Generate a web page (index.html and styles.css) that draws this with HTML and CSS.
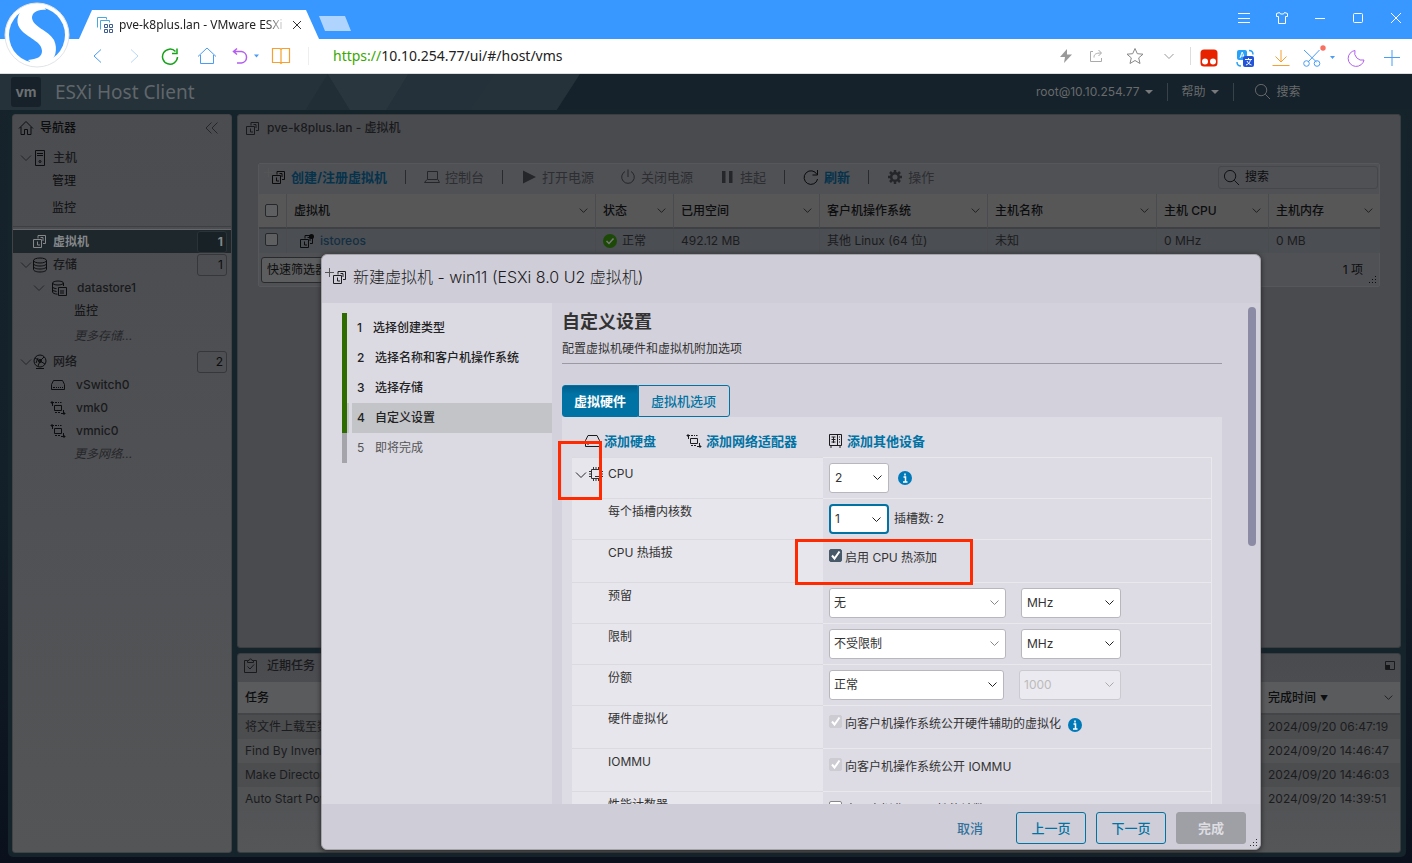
FILE: index.html
```html
<!DOCTYPE html>
<html lang="zh-CN">
<head>
<meta charset="utf-8">
<title>pve-k8plus.lan - VMware ESXi</title>
<link rel="stylesheet" href="styles.css">
</head>
<body>
<svg class="sprite" aria-hidden="true">
  <symbol id="i-vm" viewBox="0 0 15 15"><path d="M6 4.500v-3h7.500v8H11M1.500 5.500h8v8h-8zM5.500 7.500v3.500h2.500M8.500 3.500h2.500v3.500"/></symbol>
  <symbol id="i-newvm" viewBox="0 0 22 18"><path d="M0 4.500h9M4.500 0v9" stroke="#555"/><path d="M13 6.500v-3h7.500v8H18M8.500 7.500h8v8h-8zM12.500 9.500V13H15M15.500 5.500H18V9"/></symbol>
  <symbol id="i-chev" viewBox="0 0 12 12"><path d="M1 3.500l5 5 5-5"/></symbol>
  <symbol id="i-home" viewBox="0 0 16 16"><path d="M1 8.500L8 1.500l7 7M3 7v7.500h3.500V9.500h3v5H13V7"/></symbol>
  <symbol id="i-host" viewBox="0 0 16 16"><path d="M3.500.5h9v15h-9zM5 3.500h6M5 5.500h6"/><circle cx="8" cy="11.500" r="1"/></symbol>
  <symbol id="i-db" viewBox="0 0 16 16"><ellipse cx="8" cy="3.500" rx="6.500" ry="2.500"/><path d="M1.500 3.500v9c0 1.400 2.900 2.500 6.500 2.500s6.500-1.100 6.500-2.500v-9M1.500 6.500C1.500 8 4.400 9 8 9s6.500-1 6.500-2.500M1.500 9.500C1.500 11 4.400 12 8 12s6.500-1 6.500-2.500"/></symbol>
  <symbol id="i-ds" viewBox="0 0 16 16"><path d="M1.500 3c0-1 2.500-2 5.500-2s5.500 1 5.500 2-2.500 2-5.500 2-5.500-1-5.500-2zv9c0 1 2 2 5 2.200M12.500 3v3M1.500 7c.5 1 2 1.500 4 1.600M1.500 10.500l4 1M7.500 7.500h8v8h-8zM10 10v4M12 10v4"/></symbol>
  <symbol id="i-net" viewBox="0 0 16 16"><circle cx="8" cy="7" r="6"/><path d="M4 14.500h8M3 4l5 3 4-4M8 7l-2 5M8 7l5 3M4 9l2-5"/><circle cx="8" cy="7" r="1.500"/></symbol>
  <symbol id="i-switch" viewBox="0 0 16 16"><path d="M1.500 7.500L3.500 3.500h9l2 4v5h-13zM3 10.500h2M6 10.500h1M8 10.500h1M10 10.500h1M12 10.500h1"/></symbol>
  <symbol id="i-nic" viewBox="0 0 16 16"><path d="M4.500 5.500h7v5h-7zM1 2.500h3M2.500 1L1 2.500 2.500 4M2.500 3v3M5 2.500h2M8 2.500h1M10 2.500h1.500M11 13.500h4M13.500 12l1.500 1.500-1.500 1.500M13.500 10v3M5 12.500h2M8 12.500h2"/></symbol>
  <symbol id="i-search" viewBox="0 0 18 18"><circle cx="7.500" cy="7.500" r="6"/><path d="M12 12l5 5"/></symbol>
  <symbol id="i-console" viewBox="0 0 16 16"><path d="M3.500 2.500h10v8h-10zM.5 13.500h15M3 10.500l-2.500 3M14 10.500l1.500 3"/></symbol>
  <symbol id="i-power" viewBox="0 0 16 16"><path d="M5 2.500a6.300 6.300 0 1 0 6 0M8 .5V8"/></symbol>
  <symbol id="i-refresh" viewBox="0 0 16 16"><path d="M14 5.500A6.800 6.800 0 1 0 14.600 10M14.500 1v5h-5"/></symbol>
  <symbol id="i-gear" viewBox="0 0 16 16"><circle cx="8" cy="8" r="3.800" stroke-width="2.500"/><path stroke-width="2.500" d="M8 1v3M8 12v3M1 8h3M12 8h3M3 3l2 2M11 11l2 2M13 3l-2 2M5 11l-2 2"/></symbol>
  <symbol id="i-tasks" viewBox="0 0 14 16"><path d="M3.500 2.500h-3v12h12v-12h-3M3.500 4.500v-2h1.500a1.500 1.500 0 0 1 3 0h1.500v2zM3.500 8.500l2.500 2.500 4-4.500"/></symbol>
  <symbol id="i-disk" viewBox="0 0 16 16"><path d="M1.500 9.500v-2l2.500-5h9l2.500 5v6h-14v-4h14M3.500 11.500h1"/></symbol>
  <symbol id="i-device" viewBox="0 0 16 16"><path d="M2.500 1.500h12v11h-12zM10.500 1.500v11M4.500 4h4M4.500 6.500h4M4.500 9h4M6.500 4v6M12 4h1M12 6.500h1M12 9h1M4 13v2M13 13v2"/></symbol>
  <symbol id="i-cpu" viewBox="0 0 16 16"><path d="M3.500 3.500h9v9h-9zM5.500 1v2M8 1v2M10.500 1v2M5.500 13v2M8 13v2M10.500 13v2M1 5.500h2M1 8h2M1 10.500h2M13 5.500h2M13 8h2M13 10.500h2M7 10.500h4"/></symbol>
  <symbol id="i-info" viewBox="0 0 14 14"><circle cx="7" cy="7" r="7" fill="#0079b8" stroke="none"/><path d="M7 2.500v2M5.500 6h2v5M5 11h4.500" stroke="#fff" stroke-width="1.500"/></symbol>
  <symbol id="i-grip" viewBox="0 0 8 8"><path fill="currentColor" stroke="none" d="M6 0h1v1H6zM3 3h1v1H3zM6 3h1v1H6zM0 6h1v1H0zM3 6h1v1H3zM6 6h1v1H6z"/></symbol>
</svg>

<header class="browser">
  <div class="tabstrip">
    <div class="tab">
      <svg class="fav" viewBox="0 0 16 16"><path d="M.5 10.500v-10h9v2M3.500 12.500v-9h9v2" stroke="#4aa8e0"/><path d="M7.500 7.500h3v3h-3zM12.500 7.500h3v3h-3zM7.500 12.500h3v3h-3zM12.500 12.500h3v3h-3z" stroke="#3c5a94"/></svg>
      <span class="tab-title">pve-k8plus.lan - VMware ESXi</span>
      <button class="bare" aria-label="关闭标签"><svg class="x" viewBox="0 0 10 10"><path d="M1 1l8 8M9 1l-8 8" stroke="#333"/></svg></button>
    </div>
    <button class="newtab" aria-label="新标签"></button>
    <div class="winctl">
      <button class="bare" aria-label="菜单"><svg viewBox="0 0 16 16"><path d="M2 3.500h12M2 8.500h12M2 12.500h12"/></svg></button>
      <button class="bare" aria-label="皮肤"><svg viewBox="0 0 16 16"><path d="M5.500 2.500L2.500 3.500v3h2v7h7v-7h2v-3l-3-1-1 1.500h-3z"/></svg></button>
      <button class="bare" aria-label="最小化"><svg viewBox="0 0 16 16"><path d="M3 8.500h10"/></svg></button>
      <button class="bare" aria-label="最大化"><svg viewBox="0 0 16 16"><rect x="3.500" y="3.500" width="9" height="9" rx="1"/></svg></button>
      <button class="bare" aria-label="关闭"><svg viewBox="0 0 16 16"><path d="M3 3l10 10M13 3L3 13"/></svg></button>
    </div>
  </div>
  <div class="toolbar">
    <div class="tools-left">
      <button class="bare" aria-label="后退"><svg viewBox="0 0 18 18"><path d="M12 2.500L5 9l7 6.500" stroke="#4a9cf4"/></svg></button>
      <button class="bare" aria-label="前进"><svg viewBox="0 0 18 18"><path d="M6 2.500L13 9l-7 6.500" stroke="#b9d8fa"/></svg></button>
      <button class="bare" aria-label="刷新"><svg viewBox="0 0 18 18"><path d="M14.500 4.500A7.500 7.500 0 1 0 16.500 10M16 1.500v5h-5" stroke="#16a31a" stroke-width="1.500"/></svg></button>
      <button class="bare" aria-label="主页"><svg viewBox="0 0 20 18"><path d="M1 9.500L10 1l9 8.500M3.500 8v8.500h13V8" stroke="#4a9cf4"/></svg></button>
      <button class="bare" aria-label="撤销"><svg viewBox="0 0 28 18"><path d="M6 1.500L2.500 4.500 6 7.500M3 4.500h7.500a5.800 5.800 0 0 1 0 11.500H6" stroke="#b25ff0" stroke-width="1.500"/><path d="M23 7.500h5l-2.500 3z" fill="#4a9cf4" stroke="none"/></svg></button>
      <button class="bare" aria-label="收藏夹"><svg viewBox="0 0 20 18"><path d="M10 2.500v13M10 2.500L9 1.500H1.500v14H9l1 1 1-1h7.500v-14H11z" stroke="#f5a030" stroke-width="1.200"/></svg></button>
    </div>
    <div class="address"><span class="scheme">https://</span>10.10.254.77/ui/#/host/vms</div>
    <div class="addr-tools">
      <svg viewBox="0 0 16 16"><path d="M9 1L2 9h5l-1 6 8-8.500H9z" fill="#999" stroke="none"/></svg>
      <svg viewBox="0 0 16 16"><path d="M5 3.500H2.500v10h11V10M6 9.500c0-3 1.500-4.500 7-4.500M10.500 2l3 3-3 3" stroke="#aaa"/></svg>
      <svg class="star" viewBox="0 0 18 18"><path d="M9 1.500l2.300 5.200 5.700.5-4.300 3.700 1.300 5.600L9 13.500l-5 3 1.300-5.600L1 7.200l5.700-.5z" stroke="#888"/></svg>
      <svg class="dn" viewBox="0 0 16 16"><path d="M3.500 6L8 10.500 12.500 6" stroke="#999"/></svg>
    </div>
    <div class="ext-tools">
      <svg viewBox="0 0 18 18"><rect width="17" height="17" x=".5" y=".5" rx="3.500" fill="#e62200" stroke="none"/><circle cx="5" cy="12.500" r="3" fill="#fff" stroke="none"/><circle cx="13" cy="12.500" r="3" fill="#fff" stroke="none"/></svg>
      <svg viewBox="0 0 18 18"><rect x="1" y="1" width="10" height="10" rx="2" fill="#28a2f8" stroke="none"/><path d="M4 9l2.200-6L8.500 9M5 7h3" stroke="#fff"/><rect x="7" y="7" width="11" height="11" rx="2" fill="#2455d8" stroke="none"/><path d="M9 10.500h7M12.500 9v1.500M10 16c3-1 4-3 4.500-5.500M11 12c1 2 2.500 3.500 4.500 4" stroke="#fff"/><path d="M1 13c0 3 1.500 4 4 4M13 1.500c3 0 4 1.500 4 4" stroke="#28a2f8" stroke-width="1.500"/></svg>
      <svg viewBox="0 0 18 18"><path d="M9 1v12M3.500 7.500L9 13l5.500-5.500M.5 16.500h17" stroke="#f5a030"/></svg>
      <svg class="wide" viewBox="0 -4 32 22"><path d="M1 1l12.500 12M16.500 1L5 13" stroke="#4a9cf4"/><circle cx="3.500" cy="14.500" r="2.800" stroke="#4a9cf4"/><circle cx="14" cy="14.500" r="2.800" stroke="#4a9cf4"/><circle cx="20" cy="-1" r="2.700" fill="#f87060" stroke="none"/><path d="M27 7h5l-2.500 3z" fill="#4a9cf4" stroke="none"/></svg>
      <svg viewBox="0 0 18 18"><path d="M8 1.500a8 8 0 1 0 9 9.500A7.500 7.500 0 0 1 8 1.500z" stroke="#b25ff0"/></svg>
      <svg viewBox="0 0 18 18"><path d="M9 1v16M1 8.500h16" stroke="#4a9cf4"/></svg>
    </div>
  </div>
  <svg class="sogou" viewBox="0 0 66 66"><circle cx="33" cy="33" r="32" fill="#fff" stroke="#e1e4e8"/><circle cx="33" cy="33" r="28" fill="#3898ff"/><path d="M21 4C12 13 11 22 18 29c8 8 20 11 20 20 0 6-5 8-14 9l6 5 13 0c9-6 11-16 7-25C44 28 29 25 28 16c0-5 5-9 14-8L38 2z" fill="#fff"/></svg>
</header>

<main class="app">
  <div class="masthead">
    <svg class="facets" viewBox="0 0 700 36" preserveAspectRatio="none" aria-hidden="true"><path d="M0 0h575l-23 36H0z" fill="#25323a"/><path d="M325 0l-22 36h44z" fill="#222e36"/><path d="M325 0h80l-22 36h-36z" fill="#2a363e"/><path d="M405 0h85l-24 36h-83z" fill="#24313a"/></svg>
    <span class="vmlogo">vm</span>
    <span class="product">ESXi Host Client</span>
    <div class="userbar">
      <button class="bare">root@10.10.254.77 <i class="caret"></i></button>
      <button class="bare ruled">帮助 <i class="caret"></i></button>
      <label class="mast-search ruled"><svg><use href="#i-search"/></svg><input type="text" aria-label="搜索" value="搜索"></label>
    </div>
  </div>

  <div class="workspace">
    <nav class="nav">
      <div class="nav-head"><svg class="ic"><use href="#i-home"/></svg><span>导航器</span><button class="bare collapse" aria-label="折叠"><svg viewBox="0 0 14 14"><path d="M6.500 1.500L1 7l5.500 5.500M12.500 1.500L7 7l5.500 5.500"/></svg></button></div>
      <a class="node" href="#"><svg class="ch"><use href="#i-chev"/></svg><svg class="ic"><use href="#i-host"/></svg><b>主机</b></a>
      <a class="node leaf" href="#">管理</a>
      <a class="node leaf tall" href="#">监控</a>
      <hr>
      <a class="node sel" href="#"><svg class="ic"><use href="#i-vm"/></svg><b>虚拟机</b><span class="count">1</span></a>
      <a class="node" href="#"><svg class="ch"><use href="#i-chev"/></svg><svg class="ic"><use href="#i-db"/></svg><b>存储</b><span class="count">1</span></a>
      <a class="node l2" href="#"><svg class="ch"><use href="#i-chev"/></svg><svg class="ic"><use href="#i-ds"/></svg><b>datastore1</b></a>
      <a class="node leaf2" href="#">监控</a>
      <a class="node leaf2 more" href="#"><i>更多存储...</i></a>
      <a class="node" href="#"><svg class="ch"><use href="#i-chev"/></svg><svg class="ic"><use href="#i-net"/></svg><b>网络</b><span class="count">2</span></a>
      <a class="node l3" href="#"><svg class="ic"><use href="#i-switch"/></svg><b>vSwitch0</b></a>
      <a class="node l3" href="#"><svg class="ic"><use href="#i-nic"/></svg><b>vmk0</b></a>
      <a class="node l3" href="#"><svg class="ic"><use href="#i-nic"/></svg><b>vmnic0</b></a>
      <a class="node leaf2" href="#"><i>更多网络...</i></a>
    </nav>

    <div class="content">
      <section class="panel vms">
        <h1 class="panel-title"><svg class="ic"><use href="#i-vm"/></svg>pve-k8plus.lan - 虚拟机</h1>
        <div class="grid">
          <div class="gridbar">
            <button class="bare act on"><svg class="nv"><use href="#i-newvm"/></svg>创建/注册虚拟机</button><span class="sep"></span>
            <button class="bare act"><svg><use href="#i-console"/></svg>控制台</button><span class="sep"></span>
            <button class="bare act"><svg viewBox="0 0 16 16"><path d="M2 1.500v13L15 8z" fill="#252629" stroke="none"/></svg>打开电源</button>
            <button class="bare act gap"><svg><use href="#i-power"/></svg>关闭电源</button>
            <button class="bare act gap"><svg viewBox="0 0 16 16"><path d="M3 2h3.500v12H3zM10 2h3.500v12H10z" fill="#252629" stroke="none"/></svg>挂起</button><span class="sep"></span>
            <button class="bare act on"><svg><use href="#i-refresh"/></svg>刷新</button><span class="sep"></span>
            <button class="bare act"><svg><use href="#i-gear"/></svg>操作</button>
            <label class="grid-search"><svg><use href="#i-search"/></svg><input type="text" aria-label="搜索虚拟机" value="搜索"></label>
          </div>
          <table class="vmtable">
            <colgroup><col class="c1"><col class="c2"><col class="c3"><col class="c4"><col class="c5"><col class="c6"><col class="c7"><col class="c8"></colgroup>
            <thead><tr>
              <th><input type="checkbox" aria-label="全选"></th>
              <th><div>虚拟机<svg><use href="#i-chev"/></svg></div></th>
              <th><div>状态<svg><use href="#i-chev"/></svg></div></th>
              <th><div>已用空间<svg><use href="#i-chev"/></svg></div></th>
              <th><div>客户机操作系统<svg><use href="#i-chev"/></svg></div></th>
              <th><div>主机名称<svg><use href="#i-chev"/></svg></div></th>
              <th><div>主机 CPU<svg><use href="#i-chev"/></svg></div></th>
              <th><div>主机内存<svg><use href="#i-chev"/></svg></div></th>
            </tr></thead>
            <tbody><tr>
              <td><input type="checkbox" aria-label="选择 istoreos"></td>
              <td><a class="vmname" href="#"><svg viewBox="0 0 15 15"><use href="#i-vm"/><circle cx="12.500" cy="2.500" r="2.500" fill="#0b0b0c" stroke="none"/></svg>istoreos</a></td>
              <td><span class="ok"><svg viewBox="0 0 14 14"><circle cx="7" cy="7" r="7" fill="#1c4a06" stroke="none"/><path d="M3.500 7L6 9.500l4.500-5" stroke="#777" stroke-width="1.500"/></svg>正常</span></td>
              <td>492.12 MB</td><td>其他 Linux (64 位)</td><td>未知</td><td>0 MHz</td><td>0 MB</td>
            </tr></tbody>
          </table>
          <div class="gridfoot"><select class="filter" aria-label="快速筛选器"><option>快速筛选器...</option></select><span>1 项</span><svg class="grip"><use href="#i-grip"/></svg></div>
        </div>
      </section>

      <section class="panel tasks">
        <h2 class="panel-title"><svg class="tk"><use href="#i-tasks"/></svg>近期任务<button class="bare restore" aria-label="还原"><svg viewBox="0 0 12 10"><path d="M1.500.5h9v8h-9z"/><path d="M2 4h4v4H2z" fill="#161719" stroke="none"/></svg></button></h2>
        <table class="tasktable">
          <colgroup><col><col class="when"></colgroup>
          <thead><tr><th>任务</th><th><div>完成时间 <small>▼</small><svg><use href="#i-chev"/></svg></div></th></tr></thead>
          <tbody>
            <tr><td>将文件上载至数据存储</td><td>2024/09/20 06:47:19</td></tr>
            <tr><td>Find By Inventory Path</td><td>2024/09/20 14:46:47</td></tr>
            <tr><td>Make Directory</td><td>2024/09/20 14:46:03</td></tr>
            <tr><td>Auto Start Power On</td><td>2024/09/20 14:39:51</td></tr>
          </tbody>
        </table>
      </section>
    </div>
  </div>

  <div class="overlay">
    <div class="modal" role="dialog" aria-labelledby="dlg-title">
      <h2 class="modal-title" id="dlg-title"><svg><use href="#i-newvm"/></svg>新建虚拟机 - win11 (ESXi 8.0 U2 虚拟机)</h2>
      <div class="modal-body">
        <ol class="steps">
          <li class="done"><span>1</span>选择创建类型</li>
          <li class="done"><span>2</span>选择名称和客户机操作系统</li>
          <li class="done"><span>3</span>选择存储</li>
          <li class="done current"><span>4</span>自定义设置</li>
          <li><span>5</span>即将完成</li>
        </ol>
        <div class="page">
          <h3>自定义设置</h3>
          <p class="desc">配置虚拟机硬件和虚拟机附加选项</p>
          <div class="tabs"><button class="active">虚拟硬件</button><button>虚拟机选项</button></div>
          <div class="hw">
            <div class="adds">
              <button class="bare"><svg><use href="#i-disk"/></svg>添加硬盘</button>
              <button class="bare"><svg><use href="#i-nic"/></svg>添加网络适配器</button>
              <button class="bare"><svg><use href="#i-device"/></svg>添加其他设备</button>
            </div>
            <div class="form">
              <div class="row"><label class="name first" for="cpu"><svg class="ch"><use href="#i-chev"/></svg><svg class="cpu"><use href="#i-cpu"/></svg>CPU</label><div class="val"><select id="cpu" class="sm"><option>2</option></select><svg class="info"><use href="#i-info"/></svg></div></div>
              <div class="row"><label class="name" for="cores">每个插槽内核数</label><div class="val"><select id="cores" class="sm focus"><option>1</option></select><span class="note">插槽数: 2</span></div></div>
              <div class="row tall"><span class="name">CPU 热插拔</span><div class="val"><label class="chk"><input type="checkbox" checked>启用 CPU 热添加</label></div></div>
              <div class="row"><label class="name" for="resv">预留</label><div class="val"><select id="resv" class="lg combo"><option>无</option></select><select class="unit" aria-label="预留单位"><option>MHz</option></select></div></div>
              <div class="row"><label class="name" for="limit">限制</label><div class="val"><select id="limit" class="lg combo"><option>不受限制</option></select><select class="unit" aria-label="限制单位"><option>MHz</option></select></div></div>
              <div class="row"><label class="name" for="shares">份额</label><div class="val"><select id="shares" class="lg share"><option>正常</option></select><select class="unit shareval" aria-label="份额值" disabled><option>1000</option></select></div></div>
              <div class="row tall"><span class="name">硬件虚拟化</span><div class="val"><label class="chk"><input type="checkbox" checked disabled>向客户机操作系统公开硬件辅助的虚拟化</label><svg class="info hv"><use href="#i-info"/></svg></div></div>
              <div class="row tall"><span class="name">IOMMU</span><div class="val"><label class="chk"><input type="checkbox" checked disabled>向客户机操作系统公开 IOMMU</label></div></div>
              <div class="row tall"><span class="name">性能计数器</span><div class="val"><label class="chk"><input type="checkbox">启用虚拟化 CPU 性能计数器</label></div></div>
            </div>
          </div>
          <div class="thumb"></div>
          <div class="mark mark-expand"></div>
          <div class="mark mark-hotadd"></div>
        </div>
      </div>
      <div class="modal-foot">
        <button class="link">取消</button><button class="out">上一页</button><button class="out">下一页</button><button class="fin" disabled>完成</button>
        <svg class="grip"><use href="#i-grip"/></svg>
      </div>
    </div>
  </div>
</main>
</body>
</html>
```
FILE: styles.css
```css
* { box-sizing: border-box; }
html, body { height: 100%; }
body {
  margin: 0; display: flex; flex-direction: column; overflow: hidden;
  font: 12px/24px Inter, "Noto Sans CJK SC", sans-serif; color: #0c0d0e;
}
svg { fill: none; stroke: currentColor; flex: none; display: block; }
.sprite { position: absolute; width: 0; height: 0; }
button, input, select { font: inherit; color: inherit; margin: 0; }
.bare { border: 0; padding: 0; background: none; display: flex; align-items: center; }
a { color: inherit; text-decoration: none; }

/* Browser frame */
.browser { position: relative; flex: none; background: #fff; font-family: "Noto Sans", "Noto Sans CJK SC", sans-serif; }
.tabstrip { height: 39px; background: #3898ff; display: flex; align-items: flex-start; padding-left: 79px; }
.tab {
  width: 240px; height: 29px; margin-top: 10px; padding: 0 17px 0 18px; background: #fff;
  clip-path: polygon(0 100%, 13px 0, 227px 0, 100% 100%); display: flex; align-items: center; gap: 6px;
}
.fav { width: 16px; height: 16px; }
.tab-title { flex: 1; white-space: nowrap; overflow: hidden; color: #222; -webkit-mask-image: linear-gradient(90deg, #000 88%, transparent); }
.x { width: 10px; height: 10px; }
.newtab { width: 32px; height: 15px; margin-top: 16px; border: 0; background: #afd5ff; clip-path: polygon(0 0, 26px 0, 100% 100%, 6px 100%); }
.winctl { margin-left: auto; padding: 10px 8px 0 0; display: flex; gap: 22px; color: #fff; }
.winctl svg { width: 16px; height: 16px; }
.toolbar { height: 35px; display: flex; align-items: center; padding: 0 11px 0 89px; border-bottom: 1px solid #ddd; }
.tools-left { display: flex; gap: 18px; padding-right: 17px; border-right: 1px solid #eee; }
.tools-left svg { height: 18px; width: 18px; }
.tools-left button:nth-child(4) svg { width: 20px; }
.tools-left button:nth-child(5) { margin-left: -4px; }
.tools-left button:nth-child(5) svg { width: 28px; }
.tools-left button:nth-child(6) { margin-left: -6px; }
.tools-left button:nth-child(6) svg { width: 20px; }
.address { flex: 1; padding-left: 24px; font-size: 14px; color: #222; }
.scheme { color: #39a800; }
.addr-tools { display: flex; align-items: center; gap: 14px; padding-right: 13px; border-right: 1px solid #ddd; }
.addr-tools svg { width: 16px; height: 16px; }
.addr-tools .star { width: 18px; height: 18px; margin-left: 8px; }
.addr-tools .dn { margin-left: 3px; }
.ext-tools { display: flex; align-items: flex-end; gap: 18px; padding-left: 9px; }
.ext-tools svg { width: 18px; height: 18px; }
.ext-tools .wide { width: 32px; height: 22px; margin-left: -5px; margin-right: -6px; }
.sogou { position: absolute; left: 4px; top: 2px; width: 66px; height: 66px; stroke: none; }

/* Host client */
.app { position: relative; flex: 1; min-height: 0; display: flex; flex-direction: column; background: linear-gradient(#17232b, #13202a 50%, #0a111c); }
.masthead { position: relative; height: 35px; flex: none; display: flex; align-items: center; padding-left: 11px; background: #15222b; color: #60666a; }
.facets { position: absolute; left: 0; top: 0; width: 50%; height: 36px; stroke: none; }
.vmlogo { position: relative; width: 30px; height: 30px; border-radius: 3px; background: #172129; color: #6c7073; font: 700 14px/30px Inter, sans-serif; text-align: center; }
.product { position: relative; padding-left: 14px; font-family: "Noto Sans", sans-serif; font-size: 19px; }
.userbar { margin-left: auto; width: 376px; display: flex; align-items: center; gap: 14px; height: 18px; color: #696b6b; }
.userbar .bare { gap: 6px; }
.ruled { border-left: 1px solid #384249; padding-left: 13px; height: 18px; }
.ruled.bare { padding-left: 13px; }
.caret { border: 4px solid transparent; border-top-color: #77797a; border-bottom: 0; }
.mast-search { display: flex; align-items: center; gap: 5px; padding-left: 20px; }
.mast-search svg, .grid-search svg { width: 17px; height: 17px; }
.mast-search input, .grid-search input { width: 90px; border: 0; padding: 0; background: none; }

.workspace { flex: 1; min-height: 0; display: flex; gap: 5px; margin: 1px 6px 6px 8px; padding: 4px 5px 4px 4px; background: #15232b; border-radius: 5px; }
.nav { width: 220px; flex: none; border-radius: 3px; background: linear-gradient(#4b4c50, #545557); overflow: hidden; border: 1px solid #424347; }
.nav-head { height: 31px; padding: 0 12px 5px 5px; display: flex; align-items: center; gap: 6px; font-weight: 500; }
.nav .ic { width: 16px; height: 16px; }
.collapse { margin-left: auto; }
.collapse svg { width: 14px; height: 14px; color: #252629; }
.ch { width: 12px; height: 12px; color: #252629; }
.node { height: 23px; display: flex; align-items: center; padding-left: 7px; font-size: 12px; }
.node .ic { margin: 0 5px 0 0; }
.node b { font-weight: 500; color: #191a1c; }
.leaf { padding-left: 39px; }
.tall.node { height: 31px; }
.nav hr { margin: 3px 0 0; border: 0; height: 4px; border-top: 1px solid #3e3f43; border-bottom: 1px solid #65666a; }
.node.sel { background: #1d272c; color: #85878a; padding-left: 19px; }
.node.sel .ic { width: 15px; height: 15px; margin-right: 6px; }
.sel b { font-weight: 700; color: #85878a; }
.count { margin: 0 4px 0 auto; width: 30px; height: 22px; border: 1px solid #36373a; border-radius: 3px; text-align: right; padding-right: 3px; line-height: 20px; font-size: 12px; }
.sel .count { background: #182125; border-color: #2a3438; font-weight: 700; }
.l2 { padding-left: 20px; }
.l2 .ic { margin: 0 10px 0 6px; }
.l3 { padding-left: 37px; }
.l3 .ic { margin-right: 10px; }
.leaf2 { padding-left: 61px; }
.leaf2 i { color: #26272a; }
.more { height: 28px; }

.content { flex: 1; min-width: 0; display: flex; flex-direction: column; gap: 5px; }
.panel { border: 1px solid #3c3d41; border-radius: 3px; background: #4a4b4f; }
.vms { flex: 1; min-height: 0; overflow: hidden; }
.panel-title { margin: 0; height: 28px; display: flex; align-items: center; gap: 7px; padding: 0 4px 2px 7px; font-size: 12px; font-weight: 500; color: #191a1c; }
.panel-title .ic { width: 15px; height: 15px; }
.grid { margin: 20px 20px 0; border: 1px solid #56575b; border-radius: 2px; background: #505155; }
.gridbar { height: 30px; display: flex; align-items: center; padding: 0 1px 4px 5px; }
.act { font-size: 13px; gap: 5px; color: #2c2e31; white-space: nowrap; }
.act svg { width: 16px; height: 16px; color: #252629; }
.act .nv { width: 22px; height: 18px; }
.act.on { color: #06334c; font-weight: 700; }
.act.on svg { color: #0b0b0c; }
.act.gap { margin-left: 26px; }
.sep { width: 1px; height: 14px; margin: 0 18px 0 18px; background: #292a2d; }
.grid-search { margin-left: auto; width: 160px; height: 23px; border: 1px solid #46474b; border-radius: 3px; display: flex; align-items: center; gap: 5px; padding-left: 4px; }
table { border-collapse: separate; border-spacing: 0; table-layout: fixed; width: 100%; }
th, td { padding: 0; text-align: left; white-space: nowrap; overflow: hidden; }
th { font-weight: 500; }
th div { display: flex; align-items: center; gap: 4px; }
th svg { width: 9px; height: 9px; margin-left: auto; margin-right: 7px; }
.c1 { width: 27px; } .c2 { width: 309px; } .c3 { width: 78px; } .c4 { width: 146px; }
.c5 { width: 168px; } .c6 { width: 169px; } .c7 { width: 112px; } .c8 { width: 112px; }
.vmtable th { height: 35px; background: #575758; border-bottom: 2px solid #3f4043; }
.vmtable th, .vmtable td { padding-left: 7px; border-left: 1px solid #4a4b4e; }
.vmtable th:first-child, .vmtable td:first-child { padding-left: 6px; border-left: 0; }
.vmtable td { height: 24px; background: #4b4e52; color: #1b1c1e; }
.vmtable input { appearance: none; width: 13px; height: 13px; border: 1px solid #26272a; border-radius: 2px; background: #5e5f60; display: block; }
.vmtable td input { margin-bottom: 4px; }
.vmname { display: flex; align-items: center; gap: 6px; padding-left: 5px; color: #142f43; font-weight: 500; }
.vmname svg { width: 15px; height: 15px; color: #0b0b0c; }
.ok { display: flex; align-items: center; gap: 5px; }
.ok svg { width: 14px; height: 14px; }
.gridfoot { height: 33px; display: flex; align-items: center; justify-content: space-between; padding: 0 16px 0 2px; position: relative; }
.filter { appearance: none; width: 90px; height: 26px; border: 1px solid #292a2c; border-radius: 3px; background: #5c5d5e; padding: 0 5px; }
.grip { position: absolute; right: 2px; bottom: 2px; width: 8px; height: 8px; }

.tasks { height: 200px; flex: none; background: linear-gradient(#4a4b4f, #555658); overflow: hidden; }
.tasks .panel-title { padding: 0 4px 4px 6px; }
.panel-title .tk { width: 14px; height: 16px; margin-right: 2px; }
.restore { margin-left: auto; margin-right: 0; }
.restore svg { width: 12px; height: 10px; }
.tasktable { background: #525355; }
.when { width: 139px; }
.tasktable th { height: 33px; background: #5a5b5c; border-bottom: 2px solid #444548; }
.tasktable th, .tasktable td { padding-left: 7px; }
.tasktable td { height: 24px; color: #1b1c1e; }
.tasktable tr:nth-child(odd) td { background: #4c4d4f; }
small { font-size: 8px; }

/* New VM wizard */
.overlay { position: absolute; inset: 0; display: flex; padding: 180px 151px 13px 321px; }
.modal { position: relative; flex: 1; min-width: 0; display: flex; flex-direction: column; border: 1px solid #a4a3aa; border-radius: 6px; background: #cfced8; overflow: hidden; color: #333; box-shadow: 0 1px 5px #222; }
.modal-title { margin: 0; height: 48px; flex: none; display: flex; align-items: center; gap: 6px; padding: 0 3px 4px; font-size: 16px; font-weight: 300; color: #1c1c1e; }
.modal-title svg { width: 22px; height: 18px; }
.modal-body { flex: 1; min-height: 0; display: flex; overflow: hidden; }
.steps { list-style: none; width: 230px; flex: none; margin: 0; padding: 10px 0 0 20px; background: #dbdae3; }
.steps li { height: 30px; line-height: 30px; border-left: 5px solid #a5a4aa; padding-left: 10px; color: #555; }
.steps li span { display: inline-block; width: 18px; }
.steps li:first-child span { width: 16px; }
.steps .done { border-color: #2f6c00; color: #222; font-weight: 500; }
.steps .current { background: linear-gradient(90deg, #c4c4cc 2px, #dbdae3 2px, #dbdae3 5px, #c3c4c8 5px); }
.page { position: relative; flex: 1; min-width: 0; background: #d3d2dc; padding: 6px 38px 0 10px; }
.page h3 { margin: 0; font-size: 18px; line-height: 26px; font-weight: 700; }
.desc { margin: 0 0 21px; line-height: 28px; border-bottom: 1px solid #9b9aa4; }
.tabs { display: flex; }
.tabs button { height: 32px; padding: 0 11px 1px; border: 1px solid #0072a3; border-radius: 0 3px 3px 0; background: none; color: #0072a3; font-size: 13px; font-weight: 500; }
.tabs button + button { padding: 0 13px 1px 12px; }
.tabs .active { background: linear-gradient(#005f8c, #0072a3 8px); color: #fff; border-radius: 3px 0 0 3px; font-weight: 700; }
.hw { background: #dddce5; padding: 8px 10px 0; }
.adds { display: flex; height: 32px; padding-left: 12px; gap: 30px; }
.adds button { gap: 4px; color: #0072a3; font-size: 13px; font-weight: 700; }
.adds svg { width: 16px; height: 16px; color: #1c1c1e; }
.row { display: grid; grid-template-columns: 251px 1fr; min-height: 41px; }
.row.tall { min-height: 43px; }
.name { background: #e7e6ec; border-top: 1px solid #dbdae0; padding-left: 36px; line-height: 26px; }
.name.first { display: flex; align-items: flex-start; padding: 0 0 0 3px; line-height: 32px; }
.first svg { margin-top: 11px; }
.first .cpu { width: 16px; height: 16px; margin: 8px 4px 0 1px; }
.val { display: flex; align-items: flex-start; border: 1px solid #e9e8ed; border-width: 1px 1px 0 0; padding: 5px 6px; }
.val select, .filter { outline: 0; }
.val select {
  appearance: none; height: 30px; border: 1px solid #b7b7bd; border-radius: 3px; padding: 0 5px;
  background: #fff url("data:image/svg+xml,%3Csvg xmlns='http://www.w3.org/2000/svg' width='9' height='7'%3E%3Cpath d='M.5 1.500l4 4 4-4' fill='none' stroke='%23222'/%3E%3C/svg%3E") no-repeat right 6px top 10px;
}
.val .sm { width: 60px; }
.val .focus { border: 2px solid #0072a3; padding: 0 4px; border-radius: 4px; }
.val .lg { width: 177px; margin-right: 15px; padding: 0 4px; }
.val .share { width: 175px; }
.val .combo { background-image: url("data:image/svg+xml,%3Csvg xmlns='http://www.w3.org/2000/svg' width='9' height='7'%3E%3Cpath d='M.5 1.500l4 4 4-4' fill='none' stroke='%23888'/%3E%3C/svg%3E"); }
.val .unit { width: 100px; }
.val .shareval { width: 102px; padding: 0 4px; }
.val select:disabled {
  opacity: 1; border-color: #cbcad1; color: #bbb; background-color: #ebeaf0;
  background-image: url("data:image/svg+xml,%3Csvg xmlns='http://www.w3.org/2000/svg' width='9' height='7'%3E%3Cpath d='M.5 1.500l4 4 4-4' fill='none' stroke='%23aaa'/%3E%3C/svg%3E");
}
.info { width: 14px; height: 14px; margin: 8px 0 0 9px; }
.note { margin-left: 5px; line-height: 30px; }
.chk { display: flex; align-items: flex-start; gap: 3px; line-height: 26px; }
.chk input { appearance: none; width: 13px; height: 13px; margin-top: 4px; border: 1px solid #888; border-radius: 2px; background: #fff; }
.chk input:checked { border-color: #485969; background: #485969 url("data:image/svg+xml,%3Csvg xmlns='http://www.w3.org/2000/svg' width='11' height='11'%3E%3Cpath d='M2 5.500l2.500 3 5-7' fill='none' stroke='%23fff' stroke-width='2'/%3E%3C/svg%3E") center no-repeat; }
.chk input:checked:disabled { border-color: #ccccd2; background-color: #ccccd2; }
.info.hv { margin: 7px 0 0 7px; }
.thumb { position: absolute; right: 4px; top: 4px; width: 8px; height: 239px; border-radius: 4px; background: #8c8ba6; }
.mark { position: absolute; border: 3px solid #ff2a00; }
.mark-expand { left: 6px; top: 138px; width: 44px; height: 59px; }
.mark-hotadd { left: 243px; top: 236px; width: 178px; height: 46px; }
.modal-foot { height: 45px; flex: none; display: flex; align-items: center; justify-content: flex-end; gap: 10px; padding: 3px 14px 0 0; }
.modal-foot button { width: 70px; height: 32px; border: 1px solid #0072a3; border-radius: 3px; background: none; color: #0072a3; font-size: 13px; font-weight: 500; padding: 0; }
.modal-foot .link { border-color: transparent; color: #33729c; margin-right: 1px; }
.modal-foot .fin { background: #9fa0a5; border-color: #9fa0a5; color: #dddde2; font-weight: 700; }
```
